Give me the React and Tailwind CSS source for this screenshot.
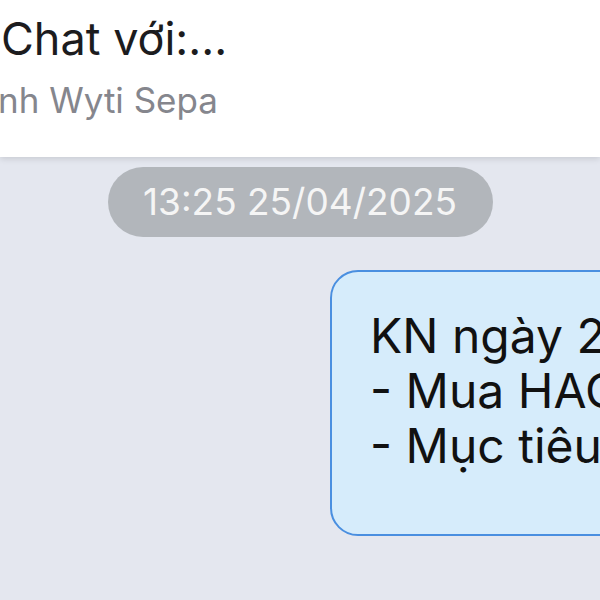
export default function App() {
  const font = { fontFamily: 'Inter, "Noto Sans", sans-serif' };
  return (
    <div className="w-[600px] h-[600px] overflow-hidden bg-[#e4e7ef] flex flex-col" style={font}>
      <div className="h-[157px] shrink-0 bg-white shadow-[0_2px_6px_rgba(0,0,0,0.12)] relative z-10 flex flex-col pt-[12px]">
        <div className="text-[45px] leading-[54px] text-[#1c1c1e] pl-[1px] whitespace-nowrap">Chat với:...</div>
        <div className="text-[35px] leading-[44px] text-[#85868d] -ml-[2px] mt-[12px] whitespace-nowrap">nh Wyti Sepa</div>
      </div>
      <div className="flex justify-center mt-[10px]">
        <div className="w-[385px] h-[70px] rounded-full bg-[#b2b6bb] flex items-center justify-center text-[37px] text-[#f5f5f5]">
          13:25 25/04/2025
        </div>
      </div>
      <div className="flex mt-[33px] pl-[330px] overflow-hidden">
        <div className="shrink-0 w-[420px] h-[266px] rounded-[28px] border-2 border-[#4a8fe0] bg-[#d6ecfb] pl-[38px] pt-[36px] text-[48px] leading-[55px] text-[#111] whitespace-nowrap">
          <div>KN ngày 25/04/2025:</div>
          <div>- Mua HAG</div>
          <div>- Mục tiêu</div>
        </div>
      </div>
    </div>
  );
}
